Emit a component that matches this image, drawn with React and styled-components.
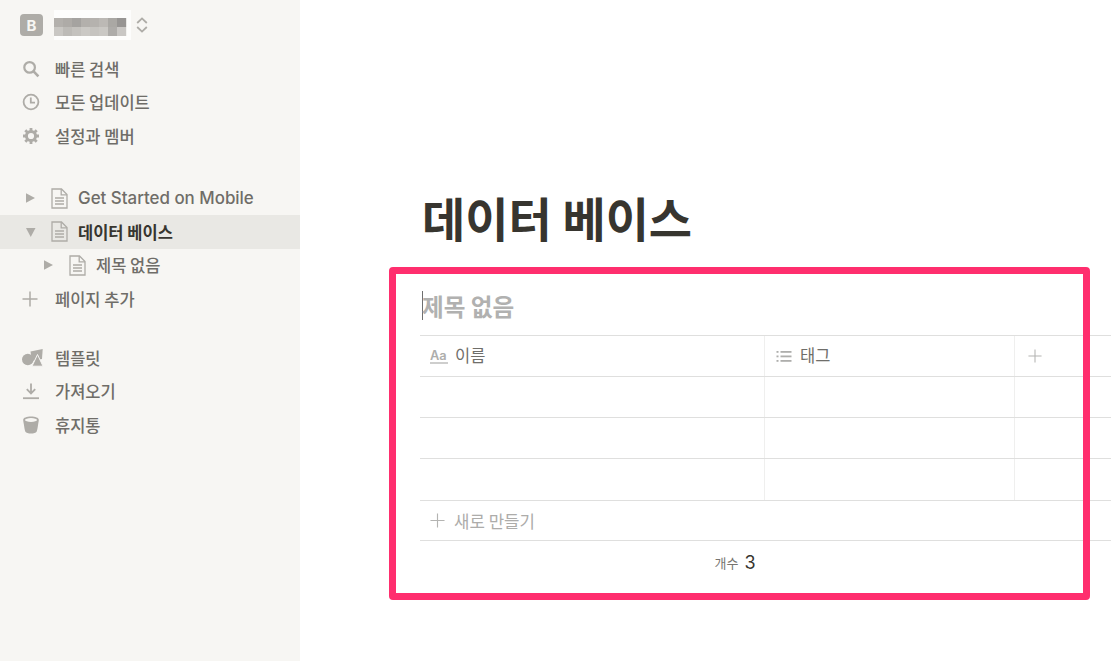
import React from "react";
import styled, { createGlobalStyle } from "styled-components";

const GlobalStyle = createGlobalStyle`
  html, body {
    margin: 0;
    padding: 0;
    background: #fff;
    overflow: hidden;
  }
  body {
    font-family: Inter, "Noto Sans CJK KR", sans-serif;
  }
`;

const Page = styled.div`
  position: relative;
  display: flex;
  width: 1111px;
  height: 661px;
  overflow: hidden;
`;

const Sidebar = styled.aside`
  width: 300px;
  flex-shrink: 0;
  background: #f7f6f3;
  padding-top: 14px;
  box-sizing: border-box;
`;

const Workspace = styled.div`
  display: flex;
  align-items: center;
  height: 22px;
  padding-left: 20px;
  margin-bottom: 16px;
`;

const Avatar = styled.div`
  width: 23px;
  height: 22px;
  flex-shrink: 0;
  border-radius: 4px;
  background: #aeaca7;
  color: #f7f6f3;
  font-size: 15px;
  font-weight: 700;
  display: flex;
  align-items: center;
  justify-content: center;
`;

const Mosaic = styled.svg`
  margin-left: 11px;
  margin-right: 5px;
  flex-shrink: 0;
  display: block;
`;

const Section = styled.div`
  margin-bottom: ${(p) => p.$gap || 0}px;
`;

const Row = styled.div`
  display: flex;
  align-items: center;
  height: 33.6px;
  padding-left: ${(p) => 22 + (p.$level || 0) * 18}px;
  background: ${(p) => (p.$active ? "#e9e8e4" : "transparent")};
`;

const IconSlot = styled.span`
  width: 33px;
  height: 18px;
  flex-shrink: 0;
  display: flex;
  align-items: center;
`;

const Arrow = styled.svg`
  width: 25px;
  flex-shrink: 0;
  margin-left: 4px;
  display: block;
`;

const DocSlot = styled.svg`
  width: 17px;
  height: 21px;
  margin-right: 10px;
  flex-shrink: 0;
  display: block;
`;

const Label = styled.span`
  font-family: ${(p) => (p.$latin ? "Inter, " : "")}"Noto Sans CJK KR", sans-serif;
  font-size: ${(p) => (p.$latin ? 16.9 : 16.5)}px;
  font-weight: ${(p) => (p.$active ? 700 : 500)};
  color: ${(p) => (p.$active ? "#37352f" : "#6f6d68")};
  white-space: nowrap;
`;

const Main = styled.main`
  flex: 1;
  min-width: 0;
  padding: 185px 0 0 120px;
  overflow: hidden;
`;

const Title = styled.h1`
  margin: 0 0 0 2px;
  height: 63px;
  line-height: 63px;
  font-family: "Noto Sans CJK KR", sans-serif;
  font-size: 47px;
  font-weight: 700;
  color: #37352f;
  white-space: nowrap;
`;

const DbTitle = styled.div`
  display: flex;
  align-items: center;
  height: 88px;
  padding: 28px 0 0 2px;
  box-sizing: border-box;
  border-bottom: 1px solid #dfdfde;
  width: 691px;
  font-family: "Noto Sans CJK KR", sans-serif;
  font-size: 23.6px;
  font-weight: 700;
  color: #b1b1b0;
`;

const Caret = styled.span`
  width: 1px;
  height: 29px;
  background: #6f6f6f;
  margin-right: -1px;
`;

const TableGrid = styled.div`
  width: 691px;
  display: grid;
  grid-template-columns: 344px 250px 97px;
`;

const Cell = styled.div`
  height: ${(p) => p.$height || 40}px;
  border-bottom: 1px solid #dfdfde;
  border-right: ${(p) => (p.$last ? "none" : "1px solid #efefee")};
  margin-right: ${(p) => (p.$last ? 0 : "-1px")};
  display: flex;
  align-items: center;
  padding-left: ${(p) => p.$pad || 0}px;
  gap: ${(p) => p.$gap || 0}px;
`;

const HeaderText = styled.span`
  font-family: "Noto Sans CJK KR", sans-serif;
  font-size: 16.5px;
  color: #6f6e6a;
  margin-top: -2px;
`;

const NewRow = styled.div`
  display: flex;
  align-items: center;
  gap: 9px;
  width: 691px;
  height: 40px;
  padding-left: 10px;
  box-sizing: border-box;
  border-bottom: 1px solid #dfdfde;
  font-family: "Noto Sans CJK KR", sans-serif;
  font-size: 16.8px;
  color: #adacaa;
`;

const Count = styled.div`
  display: flex;
  align-items: center;
  justify-content: center;
  gap: 6px;
  width: 630px;
  height: 42px;
`;

const CountLabel = styled.span`
  font-family: "Noto Sans CJK KR", sans-serif;
  font-size: 13px;
  color: #77756f;
`;

const CountValue = styled.span`
  font-family: Inter, sans-serif;
  font-size: 18px;
  color: #37352f;
`;

const Highlight = styled.div`
  position: absolute;
  left: 389px;
  top: 267px;
  width: 701px;
  height: 333px;
  box-sizing: border-box;
  border: 7px solid #ff2e6e;
  border-radius: 4px;
  pointer-events: none;
`;

const ICON = "#aeaca7";
const SIDEBAR_BG = "#f7f6f3";

const Search = () => (
  <svg width="18" height="18" viewBox="0 0 18 18" fill="none" stroke={ICON} strokeWidth="2.2">
    <circle cx="7.6" cy="7.4" r="5.3" />
    <path d="M11.6 11.4 16.4 16.3" strokeWidth="2.6" />
  </svg>
);

const Clock = () => (
  <svg width="18" height="18" viewBox="0 0 18 18" fill="none" stroke={ICON} strokeWidth="1.8">
    <circle cx="9" cy="9" r="7.4" />
    <path d="M8.8 4.6V9.6H13" />
  </svg>
);

const Gear = () => (
  <svg width="18" height="18" viewBox="0 0 18 18" fill="none" stroke={ICON}>
    <circle cx="9" cy="9" r="4.6" strokeWidth="3" />
    <path
      d="M9 1v3M9 14v3M1 9h3M14 9h3M3.3 3.3l2.2 2.2M12.5 12.5l2.2 2.2M14.7 3.3l-2.2 2.2M5.5 12.5l-2.2 2.2"
      strokeWidth="2.8"
    />
  </svg>
);

const Plus = ({ size = 16, color = ICON, weight = 1.2 }) => (
  <svg width={size} height={size} viewBox="0 0 16 16" fill="none" stroke={color} strokeWidth={weight}>
    <path d="M8 0.5V15.5M0.5 8H15.5" />
  </svg>
);

const Shapes = () => (
  <svg width="21" height="19" viewBox="0 0 21 19" fill={ICON}>
    <path d="M8.5 3.5 20.7 1 20 11 10 13Z" />
    <circle cx="5.8" cy="11.5" r="5.8" />
    <path d="M15.5 6.5 21 18.2H10Z" stroke={SIDEBAR_BG} strokeWidth="1" />
  </svg>
);

const Download = () => (
  <svg width="18" height="18" viewBox="0 0 18 18" fill="none" stroke={ICON} strokeWidth="1.8">
    <path d="M9 1.5V11M4.8 7.2 9 11.4 13.2 7.2" />
    <path d="M1 16.2H17" />
  </svg>
);

const Trash = () => (
  <svg width="18" height="18" viewBox="0 0 18 18" fill={ICON}>
    <path d="M1.2 4C1.2 1.8 4.6.6 9 .6s7.8 1.2 7.8 3.4c0 1-.3 2.4-.7 4.6-.5 3.4-.9 6-1.5 7.2C14 17 11.5 17.6 9 17.6S4 17 3.4 15.8c-.6-1.2-1-3.8-1.5-7.2C1.5 6.4 1.2 5 1.2 4z" />
    <ellipse cx="9" cy="4" rx="6" ry="1.9" fill={SIDEBAR_BG} />
  </svg>
);

const Doc = () => (
  <DocSlot viewBox="0 0 17 21" fill="none" stroke={ICON} strokeWidth="1.3">
    <path d="M1 1H10.5L16 6.5V20H1Z" />
    <path d="M10.2 1V6.8H16" />
    <path d="M4 10H13M4 13H13M4 16H13" />
  </DocSlot>
);

const ArrowIcon = ({ open }) => (
  <Arrow height="12" viewBox="0 0 25 12" fill={ICON}>
    {open ? <path d="M0 2H9.5L4.75 11Z" /> : <path d="M0 1.2 9 6 0 10.8Z" />}
  </Arrow>
);

const AaIcon = () => (
  <svg width="19" height="15" viewBox="0 0 19 15">
    <text x="0" y="11" fontFamily="Inter, sans-serif" fontSize="12.8" fontWeight="600" fill="#aeaeac">
      Aa
    </text>
    <path d="M0 14H18" stroke="#aeaeac" strokeWidth="1.2" />
  </svg>
);

const ListIcon = () => (
  <svg width="16" height="13" viewBox="0 0 16 13" fill="#aeaeac">
    <rect x="4.5" y="1" width="11" height="1.8" />
    <rect x="4.5" y="5.5" width="11" height="1.8" />
    <rect x="4.5" y="10" width="11" height="1.8" />
    <rect x="0.5" y="1" width="2" height="1.8" />
    <rect x="0.5" y="5.5" width="2" height="1.8" />
    <rect x="0.5" y="10" width="2" height="1.8" />
  </svg>
);

const Chevrons = () => (
  <svg width="12" height="16" viewBox="0 0 12 16" fill="none" stroke={ICON} strokeWidth="1.8">
    <path d="M1.2 6 6 1.4 10.8 6M1.2 10 6 14.6 10.8 10" />
  </svg>
);

const topTiles = ["#b3b0ac", "#aeaba7", "#a5a3a0", "#b3b0ac", "#b5b2ae", "#bcb9b5", "#aaa8a4", "#979593"];
const bottomTiles = ["#c9c7c3", "#bdbbb7", "#c4c2be", "#cbc9c5", "#c6c4c0", "#cac8c4", "#aeaca9", "#c9c7c4"];

const WorkspaceName = () => (
  <Mosaic width="77" height="30" viewBox="0 0 77 30">
    <rect width="77" height="30" fill="#fdfdfc" />
    {topTiles.map((c, i) => (
      <rect key={i} x={i * 9} y="8" width="9.2" height="9" fill={c} />
    ))}
    {bottomTiles.map((c, i) => (
      <rect key={i} x={i * 9} y="17" width="9.2" height="9" fill={c} />
    ))}
  </Mosaic>
);

const menuItems = [
  { icon: <Search />, label: "빠른 검색" },
  { icon: <Clock />, label: "모든 업데이트" },
  { icon: <Gear />, label: "설정과 멤버" },
];

const bottomItems = [
  { icon: <Shapes />, label: "템플릿" },
  { icon: <Download />, label: "가져오기" },
  { icon: <Trash />, label: "휴지통" },
];

const MenuRow = ({ icon, label }) => (
  <Row>
    <IconSlot>{icon}</IconSlot>
    <Label>{label}</Label>
  </Row>
);

const PageRow = ({ label, open, active, level, latin }) => (
  <Row $level={level} $active={active}>
    <ArrowIcon open={open} />
    <Doc />
    <Label $active={active} $latin={latin}>
      {label}
    </Label>
  </Row>
);

export default function App() {
  return (
    <Page>
      <GlobalStyle />
      <Sidebar>
        <Workspace>
          <Avatar>B</Avatar>
          <WorkspaceName />
          <Chevrons />
        </Workspace>
        <Section $gap={28.6}>
          {menuItems.map((item) => (
            <MenuRow key={item.label} {...item} />
          ))}
        </Section>
        <Section $gap={25}>
          <PageRow label="Get Started on Mobile" latin />
          <PageRow label="데이터 베이스" open active />
          <PageRow label="제목 없음" level={1} />
          <MenuRow icon={<Plus weight={1.5} />} label="페이지 추가" />
        </Section>
        <Section>
          {bottomItems.map((item) => (
            <MenuRow key={item.label} {...item} />
          ))}
        </Section>
      </Sidebar>
      <Main>
        <Title>데이터 베이스</Title>
        <DbTitle>
          <Caret />
          제목 없음
        </DbTitle>
        <TableGrid>
          <Cell $pad={10} $gap={6}>
            <AaIcon />
            <HeaderText>이름</HeaderText>
          </Cell>
          <Cell $pad={12} $gap={8}>
            <ListIcon />
            <HeaderText>태그</HeaderText>
          </Cell>
          <Cell $last $pad={14}>
            <Plus size={14} color="#b4b4b2" />
          </Cell>
          {[40, 40, 41].map((height, row) => (
            <React.Fragment key={row}>
              <Cell $height={height} />
              <Cell $height={height} />
              <Cell $height={height} $last />
            </React.Fragment>
          ))}
        </TableGrid>
        <NewRow>
          <Plus size={15} color="#b4b4b2" />
          새로 만들기
        </NewRow>
        <Count>
          <CountLabel>개수</CountLabel>
          <CountValue>3</CountValue>
        </Count>
      </Main>
      <Highlight />
    </Page>
  );
}
